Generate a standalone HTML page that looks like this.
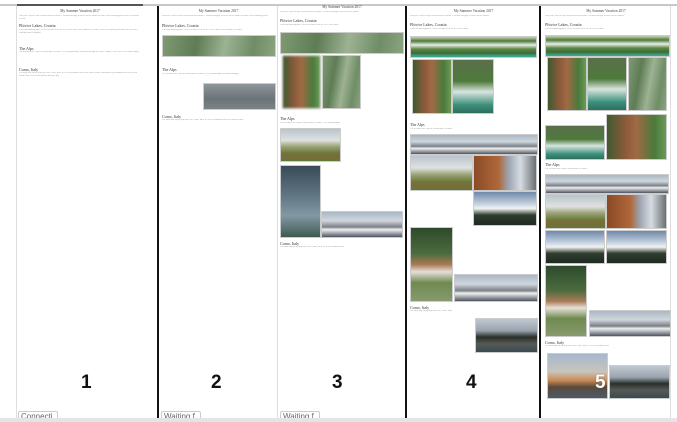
<!DOCTYPE html>
<html><head><meta charset="utf-8"><style>
body{margin:0;width:677px;height:422px;background:#fff;position:relative;overflow:hidden;font-family:"Liberation Serif",serif}
div{position:absolute;box-sizing:border-box}
.t{font-size:3.6px;color:#444;white-space:nowrap;text-align:center}
.h{font-size:4px;color:#333;white-space:nowrap}
.p{font-size:2.2px;color:#999;line-height:3px;overflow:hidden}
.im{border:1px solid #ccc}
.num{font-family:"Liberation Sans",sans-serif;font-weight:bold;font-size:19px;color:#111}
.st{font-family:"Liberation Sans",sans-serif;font-size:8px;color:#666;border:1px solid #ccc;border-bottom:none;border-radius:2px 2px 0 0;background:#fff;padding:0 2px;height:10px;overflow:hidden}
.bg{background:linear-gradient(100deg,#7f9a72,#5e7c55 30%,#9db293 55%,#6f8d66 80%,#8aa480)}
.gr{background:linear-gradient(180deg,#8e969a,#6a7377 60%,#7b8387)}
.wf{background:linear-gradient(180deg,#c5d3b5 0,#4d7a3a 20%,#e8efe9 40%,#5c8a47 60%,#3d6b33 80%,#3aa58e 95%)}
.sr{background:linear-gradient(90deg,#3f5a30,#8a5a3a 30%,#a06a44 50%,#4a7a3c 80%,#6a9a54)}
.wa{background:linear-gradient(180deg,#5a6f4a,#4e7a3c 40%,#d8e4df 60%,#3b8f7a 85%,#2e6f5e)}
.pn{background:linear-gradient(180deg,#a9b8c6,#d0d6dc 35%,#7a8088 60%,#f0f0f0 70%,#4e5560 100%)}
.cf{background:linear-gradient(180deg,#b8c4cc,#e0e2e0 35%,#9aa276 55%,#6b7a3a 75%,#7e6a3a 85%,#5f7a34)}
.ch{background:linear-gradient(90deg,#8a4a26,#b0683a 40%,#9aa2ae 55%,#d6dce2 75%,#6a6f72)}
.mt{background:linear-gradient(180deg,#6e89a8,#c2cede 35%,#f3f3f3 50%,#2f3d2e 70%,#1f2a22)}
.cw{background:linear-gradient(180deg,#2f4a2c,#4b6b3e 35%,#a87a56 50%,#e6e0d8 60%,#6f8a50 75%,#879a6e)}
.lk{background:linear-gradient(180deg,#c0c8d0,#9aa4ae 35%,#2a2f2a 55%,#555a56 75%,#3a4a52)}
.ls{background:linear-gradient(180deg,#a6b8cc,#c8c4bc 40%,#c88a56 60%,#5a4a3a 75%,#4a5a6a)}
.dk{background:linear-gradient(180deg,#3a4a58,#5e7480 40%,#8298a4 70%,#3e5a4e)}
</style></head><body>
<div style="left:0;top:4px;width:677px;height:2px;background:#c8c8c8"></div>
<div style="left:17px;top:4px;width:126px;height:2px;background:#555"></div>
<div style="left:16px;top:6px;width:1px;height:412px;background:#ddd"></div>
<div style="left:157px;top:6px;width:2px;height:412px;background:#111"></div>
<div style="left:277px;top:6px;width:1px;height:412px;background:#ddd"></div>
<div style="left:405px;top:6px;width:2px;height:412px;background:#111"></div>
<div style="left:539px;top:6px;width:2px;height:412px;background:#111"></div>
<div style="left:670px;top:6px;width:1px;height:412px;background:#ddd"></div>

<!-- Panel 1 -->
<div class="t" style="left:17px;top:9px;width:126px">My Summer Vacation 2017</div>
<div class="p" style="left:19px;top:15px;width:122px">Last year I took an epic vacation across Europe. I created this page to show off the photos of some of the amazing places that I was lucky to visit.</div>
<div class="h" style="left:19px;top:23px">Plitvice Lakes, Croatia</div>
<div class="p" style="left:19px;top:29px;width:122px">This first amazing place I'd like to share is the set of 16 or so lakes in the middle of Croatia. These are amazing waterfalls take you on a walking tour to beautiful.</div>
<div class="h" style="left:19px;top:46px">The Alps</div>
<div class="p" style="left:19px;top:51px;width:122px">The second is the Alps in Switzerland, of course. Yes, big mountains, beautiful through the whole country. There once in a lifetime thing.</div>
<div class="h" style="left:19px;top:67px">Como, Italy</div>
<div class="p" style="left:19px;top:72px;width:122px">The third stop on my trip was Lake Como, Italy. It's a very beautiful lake in the north of Italy surrounded by mountains and lovely little towns. Take a look at the photos from my trip.</div>
<div class="num" style="left:81px;top:372px">1</div>
<div class="st" style="left:18px;top:411px;width:40px">Connecti</div>

<!-- Panel 2 -->
<div class="t" style="left:160px;top:9px;width:117px">My Summer Vacation 2017</div>
<div class="p" style="left:162px;top:15px;width:113px">Last year I took an epic vacation across Europe. I created this page to show off the photos of some of the amazing places.</div>
<div class="h" style="left:162px;top:23px">Plitvice Lakes, Croatia</div>
<div class="p" style="left:162px;top:29px;width:113px">This first amazing place I'd like to share is the set of 16 or so lakes in the middle of Croatia.</div>
<div class="im bg" style="left:162px;top:35px;width:114px;height:22px"></div>
<div class="h" style="left:162px;top:67px">The Alps</div>
<div class="p" style="left:162px;top:73px;width:113px">The second is the Alps in Switzerland, of course. Yes, big mountains, beautiful through.</div>
<div class="im gr" style="left:203px;top:83px;width:73px;height:27px"></div>
<div class="h" style="left:162px;top:114px">Como, Italy</div>
<div class="p" style="left:162px;top:119px;width:113px">The third stop on my trip was Lake Como, Italy. It's a very beautiful lake in the north of Italy.</div>
<div class="num" style="left:211px;top:372px">2</div>
<div class="st" style="left:161px;top:411px;width:40px">Waiting f</div>

<!-- Panel 3 -->
<div class="t" style="left:278px;top:5px;width:128px">My Summer Vacation 2017</div>
<div class="p" style="left:280px;top:11px;width:124px">Last year I took an epic vacation across Europe. I created this page to show off the photos.</div>
<div class="h" style="left:280px;top:18px">Plitvice Lakes, Croatia</div>
<div class="p" style="left:280px;top:24px;width:124px">This first amazing place I'd like to share is the set of 16 or so lakes.</div>
<div class="im bg" style="left:280px;top:32px;width:124px;height:22px"></div>
<div class="im sr" style="left:282px;top:55px;width:39px;height:54px;filter:blur(1px)"></div>
<div class="im bg" style="left:322px;top:55px;width:39px;height:54px"></div>
<div class="h" style="left:280px;top:116px">The Alps</div>
<div class="p" style="left:280px;top:122px;width:124px">The second is the Alps in Switzerland, of course. Yes, big mountains.</div>
<div class="im cf" style="left:280px;top:128px;width:61px;height:34px"></div>
<div class="im dk" style="left:280px;top:165px;width:41px;height:73px"></div>
<div class="im pn" style="left:321px;top:211px;width:82px;height:27px"></div>
<div class="h" style="left:280px;top:241px">Como, Italy</div>
<div class="p" style="left:280px;top:246px;width:124px">The third stop on my trip was Lake Como, Italy. It's a very beautiful lake.</div>
<div class="num" style="left:332px;top:372px">3</div>
<div class="st" style="left:280px;top:411px;width:40px">Waiting f</div>

<!-- Panel 4 -->
<div class="t" style="left:408px;top:9px;width:131px">My Summer Vacation 2017</div>
<div class="p" style="left:410px;top:15px;width:127px">Last year I took an epic vacation across Europe. I created this page to show off the photos.</div>
<div class="h" style="left:410px;top:22px">Plitvice Lakes, Croatia</div>
<div class="p" style="left:410px;top:28px;width:127px">This first amazing place I'd like to share is the set of 16 or so lakes.</div>
<div class="im wf" style="left:410px;top:36px;width:127px;height:22px"></div>
<div class="im sr" style="left:412px;top:59px;width:40px;height:55px"></div>
<div class="im wa" style="left:452px;top:59px;width:42px;height:55px"></div>
<div class="h" style="left:410px;top:122px">The Alps</div>
<div class="p" style="left:410px;top:128px;width:127px">The second is the Alps in Switzerland, of course.</div>
<div class="im pn" style="left:410px;top:134px;width:128px;height:21px"></div>
<div class="im cf" style="left:410px;top:155px;width:63px;height:36px"></div>
<div class="im ch" style="left:473px;top:155px;width:64px;height:36px"></div>
<div class="im mt" style="left:473px;top:191px;width:64px;height:35px"></div>
<div class="im cw" style="left:410px;top:227px;width:43px;height:75px"></div>
<div class="im pn" style="left:454px;top:274px;width:84px;height:28px"></div>
<div class="h" style="left:410px;top:305px">Como, Italy</div>
<div class="p" style="left:410px;top:310px;width:127px">The third stop on my trip was Lake Como, Italy.</div>
<div class="im lk" style="left:475px;top:318px;width:63px;height:35px"></div>
<div class="num" style="left:466px;top:372px">4</div>

<!-- Panel 5 -->
<div class="t" style="left:542px;top:9px;width:128px">My Summer Vacation 2017</div>
<div class="p" style="left:545px;top:15px;width:124px">Last year I took an epic vacation across Europe. I created this page to show off the photos.</div>
<div class="h" style="left:545px;top:22px">Plitvice Lakes, Croatia</div>
<div class="p" style="left:545px;top:28px;width:124px">This first amazing place I'd like to share is the set of 16 or so lakes.</div>
<div class="im wf" style="left:545px;top:35px;width:125px;height:22px"></div>
<div class="im sr" style="left:547px;top:57px;width:40px;height:54px"></div>
<div class="im wa" style="left:587px;top:57px;width:40px;height:54px"></div>
<div class="im bg" style="left:628px;top:57px;width:39px;height:54px"></div>
<div class="im wa" style="left:545px;top:125px;width:60px;height:35px"></div>
<div class="im sr" style="left:606px;top:114px;width:61px;height:46px"></div>
<div class="h" style="left:545px;top:162px">The Alps</div>
<div class="p" style="left:545px;top:168px;width:124px">The second is the Alps in Switzerland, of course.</div>
<div class="im pn" style="left:545px;top:174px;width:124px;height:20px"></div>
<div class="im cf" style="left:545px;top:194px;width:61px;height:35px"></div>
<div class="im ch" style="left:606px;top:194px;width:61px;height:35px"></div>
<div class="im mt" style="left:545px;top:230px;width:60px;height:34px"></div>
<div class="im mt" style="left:606px;top:230px;width:61px;height:34px"></div>
<div class="im cw" style="left:545px;top:265px;width:42px;height:72px"></div>
<div class="im pn" style="left:589px;top:310px;width:82px;height:27px"></div>
<div class="h" style="left:545px;top:340px">Como, Italy</div>
<div class="p" style="left:545px;top:345px;width:124px">The third stop on my trip was Lake Como, Italy. It's a very beautiful lake.</div>
<div class="im ls" style="left:547px;top:353px;width:61px;height:46px"></div>
<div class="im lk" style="left:609px;top:365px;width:61px;height:34px"></div>
<div class="num" style="left:595px;top:372px;color:#fff;text-shadow:0 0 1px #333">5</div>

<div style="left:0;top:418px;width:677px;height:4px;background:#e4e4e4"></div>
</body></html>
